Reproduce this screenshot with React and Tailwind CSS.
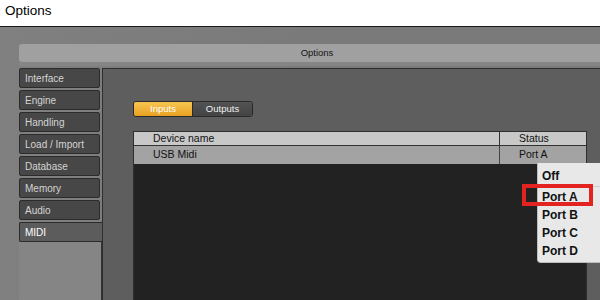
export default function App() {
  const tabs = ["Interface", "Engine", "Handling", "Load / Import", "Database", "Memory", "Audio"];
  return (
    <div className="relative w-[600px] h-[300px] overflow-hidden flex flex-col bg-[#7a7a7a] font-['Liberation_Sans',Arial,sans-serif]">
      <div className="h-[27px] shrink-0 bg-white border-b border-[#1a1a1a] flex items-center pl-[5px] pb-[3px] text-[13.5px] text-black">
        Options
      </div>
      <div className="flex-1 min-h-0 flex flex-col pl-[19px] pt-[17px] bg-gradient-to-r from-[#808080] via-[#7a7a7a] to-[#7a7a7a]">
        <div className="shrink-0 h-[18px] w-[596px] bg-[#a0a0a0] rounded-[3px] flex items-center justify-center text-[9.5px] text-[#151515]">
          Options
        </div>
        <div className="shrink-0 h-[4px] w-[596px] bg-[#858585]" />
        <div className="flex flex-1 min-h-0 mt-[2px]">
          <div className="w-[83px] shrink-0 flex flex-col">
            <div className="flex flex-col gap-[2px]">
              {tabs.map((t) => (
                <div
                  key={t}
                  className="w-[81px] h-[20px] bg-[#474747] border border-[#2b2b2b] rounded-[2px] flex items-center pl-[5px] text-[10px] text-[#d4d4d4]"
                >
                  {t}
                </div>
              ))}
              <div className="w-[83px] h-[20px] bg-[#5c5c5c] border-l border-t border-b border-[#2b2b2b] rounded-l-[2px] flex items-center pl-[5px] text-[10px] text-white">
                MIDI
              </div>
            </div>
            <div className="flex-1 bg-[#858585] border-r border-[#333]" />
          </div>
          <div className="flex-1 min-w-0 flex flex-col bg-[#5e5e5e] border-t border-l border-[#2e2e2e] pl-[30px] pt-[32px]">
            <div className="shrink-0 flex w-[120px] h-[16px] border border-[#2a2a2a] rounded-[3px] overflow-hidden text-[9.5px]">
              <div className="w-[59px] bg-gradient-to-b from-[#f8c650] to-[#e8a120] text-white flex items-center justify-center border-r border-[#2a2a2a]">
                Inputs
              </div>
              <div className="flex-1 bg-gradient-to-b from-[#525252] to-[#444] text-[#f0f0f0] flex items-center justify-center">
                Outputs
              </div>
            </div>
            <div className="mt-[14px] w-[454px] flex-1 flex flex-col border-l border-t border-r border-[#2f2f2f] text-[10.5px] text-[#111]">
              <div className="shrink-0 h-[14px] flex bg-[#c8c8c8] border-b border-[#333]">
                <div className="w-[366px] border-r border-[#333] pl-[19px] flex items-center">Device name</div>
                <div className="flex-1 pl-[19px] flex items-center">Status</div>
              </div>
              <div className="shrink-0 h-[18px] flex bg-[#a3a3a3]">
                <div className="w-[366px] border-r border-[#444] pl-[19px] flex items-center">USB Midi</div>
                <div className="flex-1 pl-[19px] flex items-center">Port A</div>
              </div>
              <div className="flex-1 bg-[#222222]" />
            </div>
          </div>
        </div>
      </div>

      <div className="absolute left-[537px] top-[163px] w-[70px] h-[100px] bg-[#e8e8e8] rounded-bl-[4px] border-l border-b border-[#bdbdbd] pt-[3px] text-[12px] font-bold text-[#111]">
        <div className="h-[19px] flex items-center pl-[4px]">Off</div>
        <div className="h-[1px] bg-[#cfcfcf] my-[1px]" />
        <div className="h-[18px] flex items-center pl-[4px]">Port A</div>
        <div className="h-[18px] flex items-center pl-[4px]">Port B</div>
        <div className="h-[18px] flex items-center pl-[4px]">Port C</div>
        <div className="h-[18px] flex items-center pl-[4px]">Port D</div>
      </div>
      <div className="absolute left-[522px] top-[184px] w-[71px] h-[22px] border-[4px] border-[#e3231f]" />
    </div>
  );
}
